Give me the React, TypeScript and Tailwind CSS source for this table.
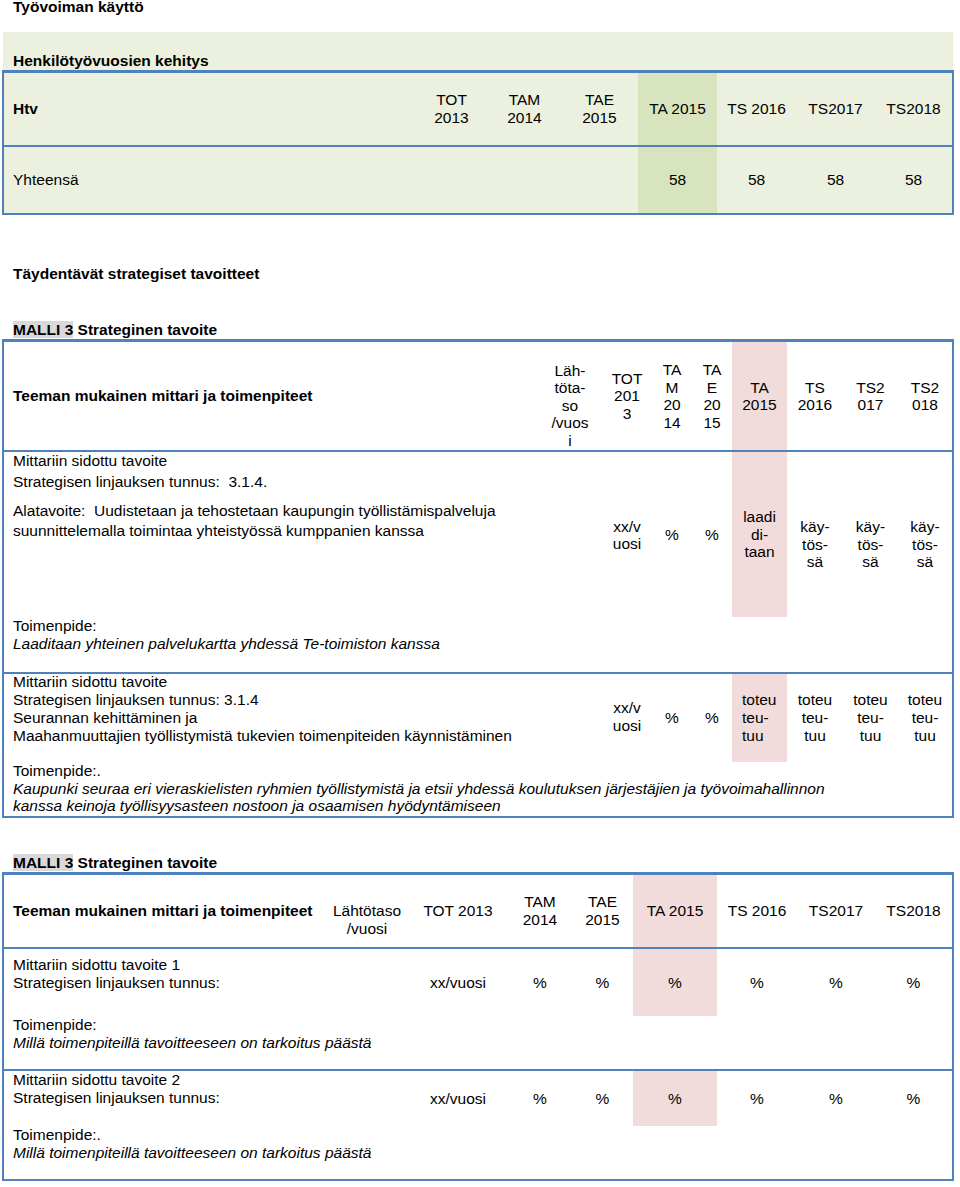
import React from "react";

const PINK = "bg-[#f2dcdb]";

function Pct({ pink = false }: { pink?: boolean }) {
  return <td className={pink ? "bg-[#f2dcdb] text-center align-middle" : "text-center align-middle"}>%</td>;
}

export default function App() {
  return (
    <div className="min-h-[1187px] bg-white font-['Liberation_Sans',Arial,sans-serif] text-[15.5px] leading-[18px] text-black">
      <div className="-mt-[2px] pl-[13px] font-bold">Työvoiman käyttö</div>

      {/* Henkilötyövuosien kehitys */}
      <div className="mt-[16px] ml-[3px] w-[950px] bg-[#ebf1de]">
        <div className="h-[38px] pt-[20px] pl-[10px] font-bold">Henkilötyövuosien kehitys</div>
        <table className="-ml-[1px] w-[952px] table-fixed border-separate border-spacing-0 border-x-2 border-t-[3px] border-b-2 border-[#4f81bd]">
          <colgroup>
            <col className="w-[411px]" />
            <col className="w-[73px]" />
            <col className="w-[73px]" />
            <col className="w-[77px]" />
            <col className="w-[79px]" />
            <col className="w-[79px]" />
            <col className="w-[79px]" />
            <col className="w-[77px]" />
          </colgroup>
          <tbody>
            <tr>
              <td className="h-[72px] pl-[9px] align-middle font-bold">Htv</td>
              <td className="text-center align-middle">TOT<br />2013</td>
              <td className="text-center align-middle">TAM<br />2014</td>
              <td className="text-center align-middle">TAE<br />2015</td>
              <td className="bg-[#d7e4bd] text-center align-middle">TA 2015</td>
              <td className="text-center align-middle">TS 2016</td>
              <td className="text-center align-middle">TS2017</td>
              <td className="text-center align-middle">TS2018</td>
            </tr>
            <tr>
              <td className="h-[68px] border-t-2 border-[#4f81bd] pl-[9px] align-middle">Yhteensä</td>
              <td className="border-t-2 border-[#4f81bd]"></td>
              <td className="border-t-2 border-[#4f81bd]"></td>
              <td className="border-t-2 border-[#4f81bd]"></td>
              <td className="border-t-2 border-[#4f81bd] bg-[#d7e4bd] text-center align-middle">58</td>
              <td className="border-t-2 border-[#4f81bd] text-center align-middle">58</td>
              <td className="border-t-2 border-[#4f81bd] text-center align-middle">58</td>
              <td className="border-t-2 border-[#4f81bd] text-center align-middle">58</td>
            </tr>
          </tbody>
        </table>
      </div>

      <div className="mt-[50px] pl-[13px] font-bold">Täydentävät strategiset tavoitteet</div>
      <div className="mt-[38px] pl-[13px] font-bold">
        <span className="bg-[#d9d9d9]">MALLI 3</span> Strateginen tavoite
      </div>

      {/* MALLI 3, taulukko 1 */}
      <table className="ml-[2px] w-[952px] table-fixed border-separate border-spacing-0 border-x-2 border-t-[3px] border-b-2 border-[#4f81bd]">
        <colgroup>
          <col className="w-[534px]" />
          <col className="w-[64px]" />
          <col className="w-[50px]" />
          <col className="w-[40px]" />
          <col className="w-[40px]" />
          <col className="w-[55px]" />
          <col className="w-[56px]" />
          <col className="w-[55px]" />
          <col className="w-[54px]" />
        </colgroup>
        <tbody className="leading-[17.5px]">
          <tr>
            <td className="h-[108px] pl-[9px] align-middle font-bold leading-[18px]">Teeman mukainen mittari ja toimenpiteet</td>
            <td className="pb-[1px] text-center align-bottom">Läh-<br />töta-<br />so<br />/vuos<br />i</td>
            <td className="text-center align-middle">TOT<br />201<br />3</td>
            <td className="text-center align-middle">TA<br />M<br />20<br />14</td>
            <td className="text-center align-middle">TA<br />E<br />20<br />15</td>
            <td className={`${PINK} text-center align-middle`}>TA<br />2015</td>
            <td className="text-center align-middle">TS<br />2016</td>
            <td className="text-center align-middle">TS2<br />017</td>
            <td className="text-center align-middle">TS2<br />018</td>
          </tr>
          <tr>
            <td className="h-[167px] border-t-2 border-[#4f81bd] pl-[9px] align-top leading-[18px]">
              <div>Mittariin sidottu tavoite</div>
              <div className="mt-[3px]">Strategisen linjauksen tunnus:{"\u00a0 "}3.1.4.</div>
              <div className="mt-[10px] leading-[20px]">
                Alatavoite:{"\u00a0 "}Uudistetaan ja tehostetaan kaupungin työllistämispalveluja
                <br />
                suunnittelemalla toimintaa yhteistyössä kumppanien kanssa
              </div>
            </td>
            <td className="border-t-2 border-[#4f81bd]"></td>
            <td className="border-t-2 border-[#4f81bd] pt-[66px] text-center align-top leading-[17px]">xx/v<br />uosi</td>
            <td className="border-t-2 border-[#4f81bd] pt-[74px] text-center align-top">%</td>
            <td className="border-t-2 border-[#4f81bd] pt-[74px] text-center align-top">%</td>
            <td className="border-t-2 border-[#4f81bd] bg-[#f2dcdb] pt-[56px] text-center align-top">laadi<br />di-<br />taan</td>
            <td className="border-t-2 border-[#4f81bd] pt-[66px] text-center align-top">käy-<br />tös-<br />sä</td>
            <td className="border-t-2 border-[#4f81bd] pt-[66px] text-center align-top">käy-<br />tös-<br />sä</td>
            <td className="border-t-2 border-[#4f81bd] pt-[66px] text-center align-top">käy-<br />tös-<br />sä</td>
          </tr>
          <tr>
            <td colSpan={9} className="h-[55px] pl-[9px] align-top leading-[18px]">
              <div>Toimenpide:</div>
              <div className="italic">Laaditaan yhteinen palvelukartta yhdessä Te-toimiston kanssa</div>
            </td>
          </tr>
          <tr>
            <td className="h-[90px] border-t-2 border-[#4f81bd] pl-[9px] align-top leading-[18px]">
              <div className="-mt-[1px]">Mittariin sidottu tavoite</div>
              <div>Strategisen linjauksen tunnus: 3.1.4</div>
              <div>Seurannan kehittäminen ja</div>
              <div>Maahanmuuttajien työllistymistä tukevien toimenpiteiden käynnistäminen</div>
            </td>
            <td className="border-t-2 border-[#4f81bd]"></td>
            <td className="border-t-2 border-[#4f81bd] pt-[25px] text-center align-top leading-[18px]">xx/v<br />uosi</td>
            <td className="border-t-2 border-[#4f81bd] pt-[35px] text-center align-top">%</td>
            <td className="border-t-2 border-[#4f81bd] pt-[35px] text-center align-top">%</td>
            <td className="border-t-2 border-[#4f81bd] bg-[#f2dcdb] pt-[17px] pl-[10px] text-left align-top leading-[18px]">toteu<br />teu-<br />tuu</td>
            <td className="border-t-2 border-[#4f81bd] pt-[17px] text-center align-top leading-[18px]">toteu<br />teu-<br />tuu</td>
            <td className="border-t-2 border-[#4f81bd] pt-[17px] text-center align-top leading-[18px]">toteu<br />teu-<br />tuu</td>
            <td className="border-t-2 border-[#4f81bd] pt-[17px] text-center align-top leading-[18px]">toteu<br />teu-<br />tuu</td>
          </tr>
          <tr>
            <td colSpan={9} className="h-[54px] pl-[9px] align-top">
              <div>Toimenpide:.</div>
              <div className="italic">
                Kaupunki seuraa eri vieraskielisten ryhmien työllistymistä ja etsii yhdessä koulutuksen järjestäjien ja työvoimahallinnon
                <br />
                kanssa keinoja työllisyysasteen nostoon ja osaamisen hyödyntämiseen
              </div>
            </td>
          </tr>
        </tbody>
      </table>

      <div className="mt-[36px] pl-[13px] font-bold">
        <span className="bg-[#d9d9d9]">MALLI 3</span> Strateginen tavoite
      </div>

      {/* MALLI 3, taulukko 2 */}
      <table className="ml-[2px] w-[952px] table-fixed border-separate border-spacing-0 border-x-2 border-t-[3px] border-b-2 border-[#4f81bd]">
        <colgroup>
          <col className="w-[322px]" />
          <col className="w-[82px]" />
          <col className="w-[100px]" />
          <col className="w-[64px]" />
          <col className="w-[61px]" />
          <col className="w-[84px]" />
          <col className="w-[80px]" />
          <col className="w-[78px]" />
          <col className="w-[77px]" />
        </colgroup>
        <tbody>
          <tr>
            <td className="h-[72px] whitespace-nowrap pl-[9px] align-middle font-bold">Teeman mukainen mittari ja toimenpiteet</td>
            <td className="pt-[27px] text-center align-top">Lähtötaso<br />/vuosi</td>
            <td className="text-center align-middle">TOT 2013</td>
            <td className="text-center align-middle">TAM<br />2014</td>
            <td className="text-center align-middle">TAE<br />2015</td>
            <td className={`${PINK} text-center align-middle`}>TA 2015</td>
            <td className="text-center align-middle">TS 2016</td>
            <td className="text-center align-middle">TS2017</td>
            <td className="text-center align-middle">TS2018</td>
          </tr>
          <tr className="[&>td]:border-t-2 [&>td]:border-[#4f81bd]">
            <td className="h-[69px] pt-[7px] pl-[9px] align-top">
              <div>Mittariin sidottu tavoite 1</div>
              <div>Strategisen linjauksen tunnus:</div>
            </td>
            <td></td>
            <td className="text-center align-middle">xx/vuosi</td>
            <Pct />
            <Pct />
            <Pct pink />
            <Pct />
            <Pct />
            <Pct />
          </tr>
          <tr>
            <td colSpan={9} className="h-[53px] pl-[9px] align-top">
              <div>Toimenpide:</div>
              <div className="italic">Millä toimenpiteillä tavoitteeseen on tarkoitus päästä</div>
            </td>
          </tr>
          <tr className="[&>td]:border-t-2 [&>td]:border-[#4f81bd]">
            <td className="h-[57px] pl-[9px] align-top">
              <div>Mittariin sidottu tavoite 2</div>
              <div>Strategisen linjauksen tunnus:</div>
            </td>
            <td></td>
            <td className="text-center align-middle">xx/vuosi</td>
            <Pct />
            <Pct />
            <Pct pink />
            <Pct />
            <Pct />
            <Pct />
          </tr>
          <tr>
            <td colSpan={9} className="h-[53px] pl-[9px] align-top">
              <div>Toimenpide:.</div>
              <div className="italic">Millä toimenpiteillä tavoitteeseen on tarkoitus päästä</div>
            </td>
          </tr>
        </tbody>
      </table>
    </div>
  );
}
